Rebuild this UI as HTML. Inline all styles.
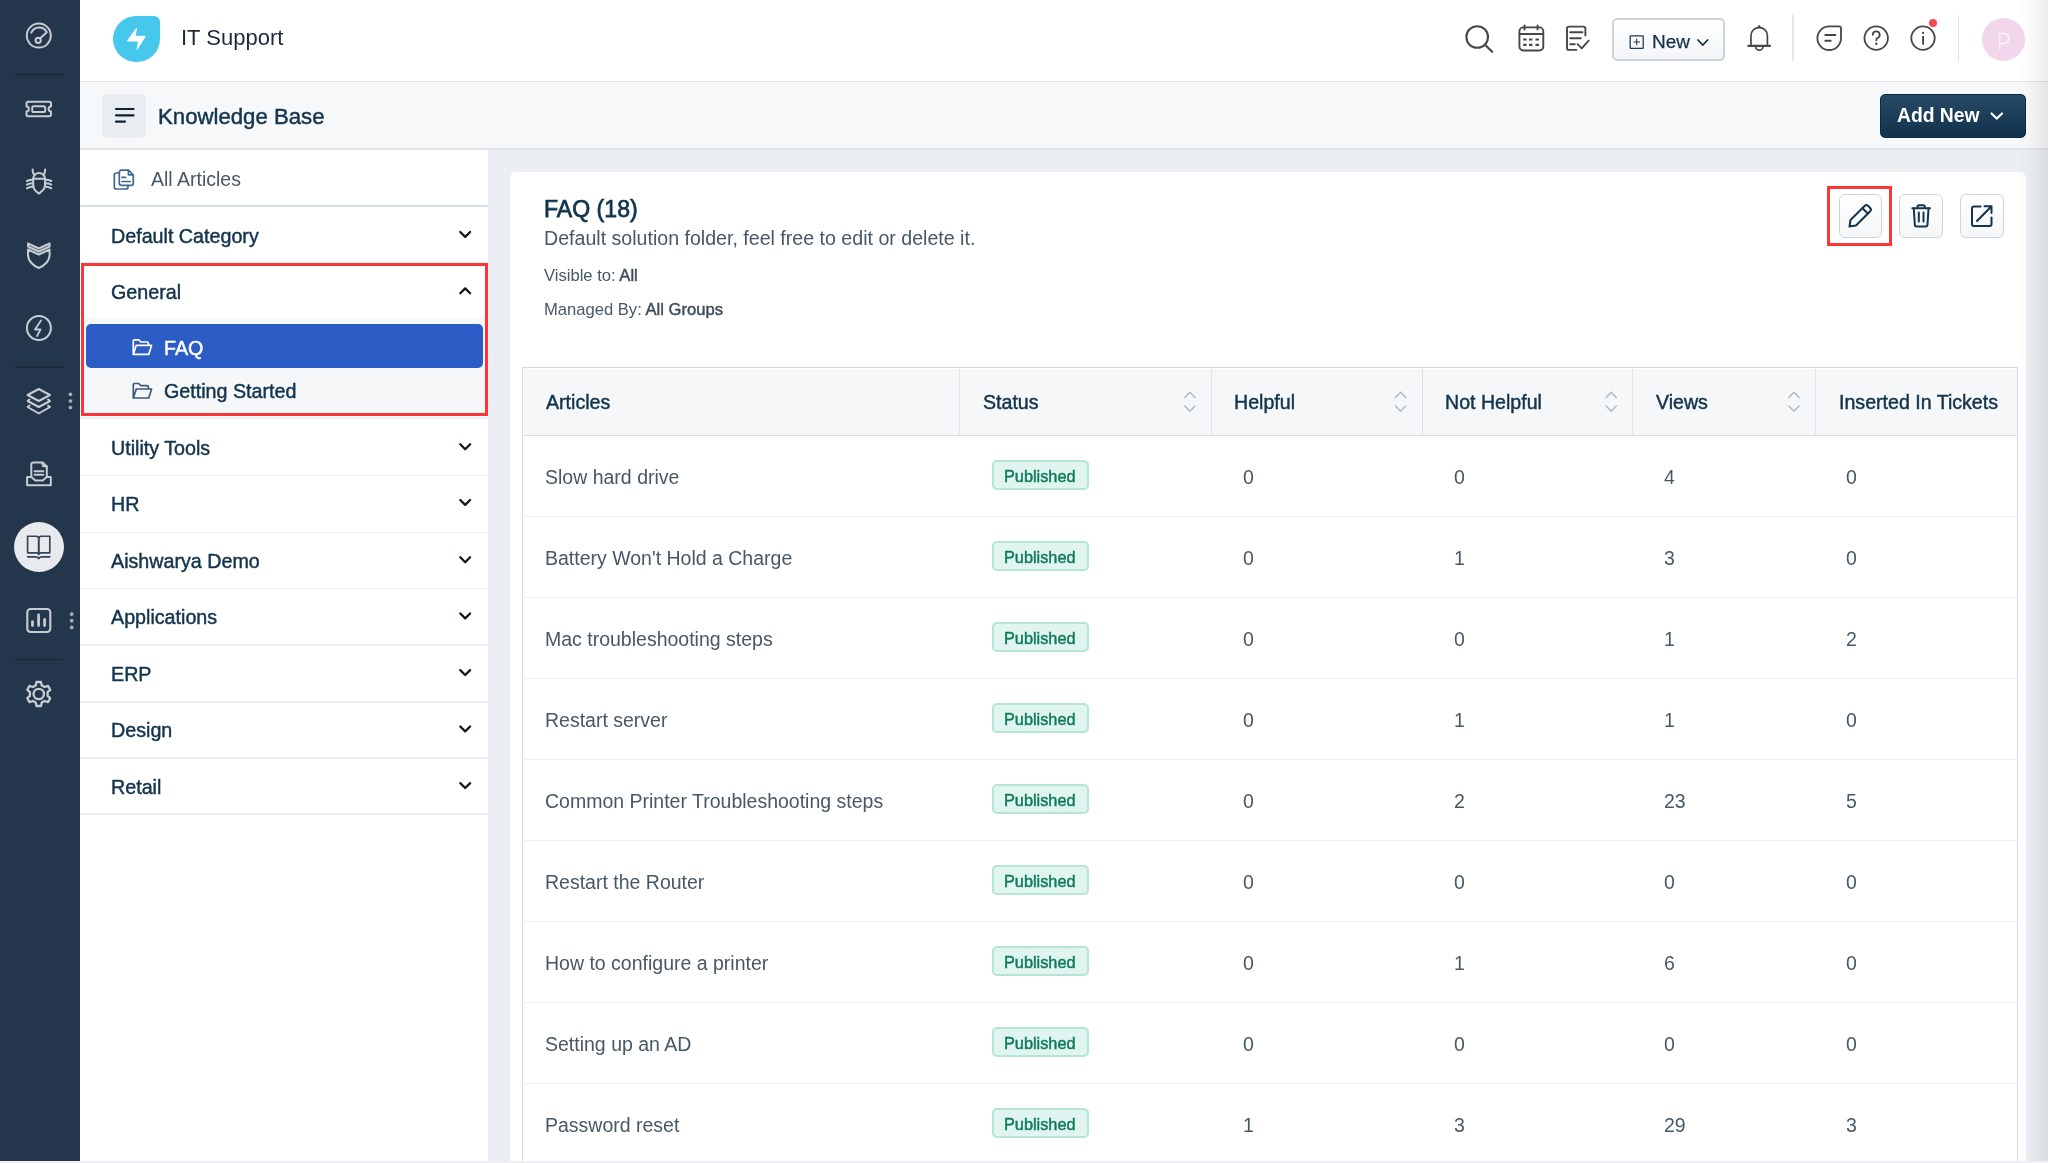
<!DOCTYPE html><html><head><meta charset="utf-8"><style>
*{margin:0;padding:0;box-sizing:border-box}
html,body{width:2048px;height:1163px;overflow:hidden;background:#fff;font-family:"Liberation Sans",sans-serif}
.a{position:absolute}
.t{position:absolute;line-height:1;white-space:nowrap;will-change:transform}
.sb{-webkit-text-stroke:0.45px currentColor}
.b{font-weight:bold}
svg{position:absolute;overflow:visible}
</style></head><body>
<div class="a" style="left:0;top:0;width:80px;height:1163px;background:#24364b"></div>
<svg style="left:0;top:0" width="80" height="1163" fill="none" stroke="#c6ccd3" stroke-width="2" stroke-linecap="round" stroke-linejoin="round">
<!-- gauge -->
<circle cx="38.8" cy="35.6" r="12"/>
<path d="M31.3 32.6 A8.5 8.5 0 0 1 46.8 32.2"/>
<circle cx="38.2" cy="40.3" r="2.6"/>
<path d="M40.2 38.3 L46 33"/>
<!-- divider -->
<path d="M15 74.5 H62.5" stroke="#1a2838" stroke-width="1.5"/>
<!-- ticket -->
<path d="M28.2 101.7 H49.3 A1.8 1.8 0 0 1 51 103.5 V106.6 A2.4 2.4 0 0 0 51 111.4 V114.4 A1.8 1.8 0 0 1 49.3 116.2 H28.2 A1.8 1.8 0 0 1 26.5 114.4 V111.4 A2.4 2.4 0 0 0 26.5 106.6 V103.5 A1.8 1.8 0 0 1 28.2 101.7Z"/>
<rect x="32.2" y="106.3" width="13" height="5.8" rx="1.6"/>
<!-- bug -->
<path d="M33.2 178.7 A5.9 5.6 0 0 1 45 178.7 Z"/>
<path d="M33.2 178.7 V186 C33.2 188.3 36 191.5 38.9 193.6 C41.8 191.5 45 188.3 45 186 V178.7"/>
<path d="M34 174.5 C33 173.3 32.6 171.6 32.6 169.6 M43.8 174.5 C44.8 173.3 45.2 171.6 45.2 169.6"/>
<path d="M33.2 179.8 C30.6 179.8 28.4 180.3 26.9 181 M33.2 183.3 C30.6 183.3 28.4 183.8 26.9 184.6 M33.6 186.6 C30.8 186.8 28.5 187.5 26.9 188.3"/>
<path d="M45 179.8 C47.6 179.8 49.8 180.3 51.3 181 M45 183.3 C47.6 183.3 49.8 183.8 51.3 184.6 M44.6 186.6 C47.4 186.8 49.7 187.5 51.3 188.3"/>
<!-- shield -->
<path d="M28 243.5 L38.8 248.5 L49.6 243.5 V246.5 L38.8 251.5 L28 246.5Z"/>
<path d="M28 249.5 L38.8 254.5 L49.6 249.5 V255 C49.6 261 44 266 38.8 268 C33.6 266 28 261 28 255Z"/>
<!-- lightning circle -->
<circle cx="38.9" cy="328" r="12"/>
<path d="M41 320.5 L35 329.5 H40.5 L37 336" stroke-width="1.8"/>
<!-- divider -->
<path d="M15 367 H62.5" stroke="#1a2838" stroke-width="1.5"/>
<!-- layers -->
<path d="M38.8 389 L50 395 L38.8 401 L27.6 395Z"/>
<path d="M29.5 399.5 L27.6 401 L38.8 407 L50 401 L48.1 399.5"/>
<path d="M29.5 405.5 L27.6 407 L38.8 413.5 L50 407 L48.1 405.5"/>
<!-- inbox -->
<path d="M31.3 476.6 V464.5 A2 2 0 0 1 33.3 462.5 H42.7 L46.8 466.5 V476.6"/>
<path d="M42.7 462.7 V465.3 A1 1 0 0 0 43.7 466.3 H46.6"/>
<path d="M34.6 471.2 H43.3 M34.6 474.7 H43.3"/>
<path d="M27.1 476.9 H31.3 L35.3 480.4 H42.7 L46.8 476.9 H50.8 V485.3 H27.1 Z"/>
<!-- chart -->
<rect x="27.3" y="609" width="23" height="23" rx="3.2" stroke-width="2.1"/>
<path d="M32.5 621.5 V625.6 M38.6 614.8 V625.6 M44.6 619.4 V625.6" stroke-width="2.7"/>
<!-- divider -->
<path d="M15 659.5 H62.5" stroke="#1a2838" stroke-width="1.5"/>
<!-- gear -->
<path stroke-width="2.3" d="M36.5 682 H41 L41.8 685.4 L44.6 687 L48 685.9 L50.2 689.8 L47.6 692.2 V695.8 L50.2 698.2 L48 702.1 L44.6 701 L41.8 702.6 L41 706 H36.5 L35.7 702.6 L32.9 701 L29.5 702.1 L27.3 698.2 L29.9 695.8 V692.2 L27.3 689.8 L29.5 685.9 L32.9 687 L35.7 685.4Z"/>
<circle cx="38.75" cy="694" r="5.2" stroke-width="2.3"/>
</svg>
<svg style="left:0;top:0" width="80" height="700" fill="#a6afb8"><circle cx="70.45" cy="394.3" r="1.85"/><circle cx="70.45" cy="401" r="1.85"/><circle cx="70.45" cy="407.5" r="1.85"/><circle cx="71.7" cy="614.1" r="1.85"/><circle cx="71.7" cy="620.7" r="1.85"/><circle cx="71.7" cy="627.4" r="1.85"/></svg>
<div class="a" style="left:13.6px;top:522px;width:50px;height:50px;border-radius:50%;background:#e8eaed"></div>
<svg style="left:0;top:0" width="80" height="600" fill="none" stroke="#364556" stroke-width="1.65" stroke-linejoin="round" stroke-linecap="round">
<path d="M27.6 536.2 H36 C37.5 536.2 38.7 537.2 38.7 538.8 V554.5 C38.7 553.5 37.8 552.8 36.5 552.8 H27.6Z"/>
<path d="M49.8 536.2 H41.4 C39.9 536.2 38.7 537.2 38.7 538.8 V554.5 C38.7 553.5 39.6 552.8 40.9 552.8 H49.8Z"/>
<path d="M27.6 556.8 H35.5 C37 556.8 38.2 557.6 38.7 558.6 C39.2 557.6 40.4 556.8 41.9 556.8 H49.8"/>
</svg>
<div class="a" style="left:80px;top:0;width:1968px;height:82px;background:#fff;border-bottom:1px solid #dfe3e8"></div>
<div class="a" style="left:113.3px;top:16.4px;width:46.4px;height:46px;background:#45c8ec;border-radius:23px 6px 23px 23px"></div>
<svg style="left:0;top:0" width="200" height="80"><path d="M136.6 28.3 L134.9 36.3 H145.3 L137 49.5 L138.6 41 H127.2 Z" fill="#fff" stroke="#fff" stroke-width="1" stroke-linejoin="round"/></svg>
<div class="t" style="left:180.6px;top:26.97px;font-size:22px;color:#1b2b3a;">IT Support</div>
<svg style="left:0;top:0" width="2048" height="80" fill="none" stroke="#474747" stroke-width="1.9" stroke-linecap="round" stroke-linejoin="round">
<circle cx="1477.2" cy="37" r="10.8" stroke-width="2.1"/>
<path d="M1485.5 45.3 L1492.2 51.8" stroke-width="2.2"/>
<rect x="1519.4" y="27.4" width="23.9" height="23.1" rx="4"/>
<path d="M1519.4 34 H1543.3"/>
<path d="M1524.5 25.4 V29.6 M1537.6 25.4 V29.6" stroke-width="2"/>
<path d="M1524.3 39.5 h1.2 M1530.1 39.5 h1.2 M1536.6 39.5 h1.2 M1524.3 44.8 h1.2 M1530.1 44.8 h1.2 M1536.6 44.8 h1.2" stroke-width="2.2" stroke-linecap="square"/>
<path d="M1576.4 49.9 H1569 A2 2 0 0 1 1567 47.9 V28.6 A2 2 0 0 1 1569 26.6 H1583.4 A2 2 0 0 1 1585.4 28.6 V35.6"/>
<path d="M1570.2 32.3 H1582.5 M1570.2 38.3 H1580.8 M1570.2 44.2 H1574.8"/>
<path d="M1577.6 44.2 L1581.7 48.3 L1588.7 40.7"/>
<path d="M1751 45.5 V35.5 C1751 30.8 1754.6 27.6 1759.2 27.6 C1763.8 27.6 1767.4 30.8 1767.4 35.5 V45.5" stroke-width="1.7"/>
<path d="M1748.3 45.9 H1770" stroke-width="2.1"/>
<path d="M1755.6 46.5 A3.7 3.7 0 0 0 1763 46.5" stroke-width="1.7"/>
<circle cx="1759.2" cy="26.6" r="0.8" fill="#474747" stroke-width="1.2"/>
<path d="M1841 38.2 A11.8 11.8 0 1 1 1829.2 26.4 H1838.8 A2.2 2.2 0 0 1 1841 28.6 Z" stroke-width="1.8"/>
<path d="M1825.3 35 H1835.4 M1825.3 40.7 H1830.7" stroke-width="1.9"/>
<circle cx="1876.2" cy="38.1" r="11.7" stroke-width="1.8"/>
<path d="M1872.7 34.8 A3.5 3.5 0 1 1 1877.4 38.1 C1876.6 38.6 1876.3 39.3 1876.3 40.3" stroke-width="1.8"/>
<path d="M1876.3 43.6 V43.9" stroke-width="2.3"/>
<circle cx="1923" cy="38.1" r="11.7" stroke-width="1.8"/>
<path d="M1923.1 36.6 V43.9" stroke-width="1.9"/>
<path d="M1923.1 32.8 V33" stroke-width="2.2"/>
</svg>
<div class="a" style="left:1928.95px;top:18.95px;width:7.9px;height:7.9px;border-radius:50%;background:#f04b4e"></div>
<div class="a" style="left:1792.3px;top:14.7px;width:1.4px;height:46.5px;background:#e3e6e9"></div>
<div class="a" style="left:1958px;top:14.7px;width:1.4px;height:46.5px;background:#e3e6e9"></div>
<div class="a" style="left:1612px;top:18px;width:113px;height:43px;border:2px solid #cbd3db;border-radius:5px;background:linear-gradient(#fff,#f3f5f7)"></div>
<svg style="left:0;top:0" width="2048" height="80" fill="none" stroke="#1f3b52" stroke-width="1.3"><rect x="1630.2" y="35.8" width="13" height="12.6" rx="0.5"/><path d="M1636.7 38.8 V45.2 M1633.4 42 H1640" stroke-width="1.1"/></svg>
<div class="t sb" style="left:1651.8px;top:31.71px;font-size:19px;color:#12344d;-webkit-text-stroke:0.25px currentColor;">New</div>
<svg style="left:0;top:0" width="2048" height="80" fill="none" stroke="#12344d" stroke-width="1.8" stroke-linecap="round"><path d="M1698 40 L1702.8 45 L1707.6 40"/></svg>
<div class="a" style="left:1982px;top:18px;width:43px;height:43px;border-radius:50%;background:#f2d6ec"></div>
<svg style="left:0;top:0" width="2048" height="80" fill="none" stroke="#fdf5fb" stroke-width="1.5"><path d="M1999.6 49.6 V33.4 H2004 C2007 33.4 2008.6 35.4 2008.6 38.4 C2008.6 41.4 2007 43.4 2004 43.4 H1999.6"/></svg>
<div class="a" style="left:80px;top:82px;width:1968px;height:68px;background:#f7f8fa;border-bottom:2px solid #dfe3e8"></div>
<div class="a" style="left:102px;top:94px;width:44px;height:44px;border-radius:5px;background:#e9edf1"></div>
<svg style="left:0;top:0" width="200" height="150" stroke="#0e2233" stroke-width="2.2" stroke-linecap="round"><path d="M116 109 H133.5 M116 115.3 H133.5 M116 121.6 H125"/></svg>
<div class="t sb" style="left:158px;top:105.90px;font-size:22.2px;color:#12344d;">Knowledge Base</div>
<div class="a" style="left:1880px;top:94px;width:146px;height:44px;border-radius:5px;background:linear-gradient(#274a67,#12324b);border:1px solid #0e2a40"></div>
<div class="t b" style="left:1897.4px;top:105.96px;font-size:19.3px;color:#fff;">Add New</div>
<svg style="left:0;top:0" width="2048" height="150" fill="none" stroke="#fff" stroke-width="2.2" stroke-linecap="round"><path d="M1991.5 113.5 L1996.8 118.5 L2002 113.5"/></svg>
<div class="a" style="left:80px;top:150px;width:408px;height:1013px;background:#fff"></div>
<div class="a" style="left:488px;top:150px;width:1560px;height:1013px;background:#ebeef2"></div>
<svg style="left:0;top:0" width="500" height="200" fill="none" stroke="#3e6a91" stroke-width="1.7" stroke-linejoin="round" stroke-linecap="round"><path d="M118.8 173 H116.3 A2 2 0 0 0 114.3 175 V187 A2 2 0 0 0 116.3 189 H126 A2 2 0 0 0 128 187 V185.6"/><path d="M119.3 172.3 A2 2 0 0 1 121.3 170.2 H128.5 L133.3 175 V183.3 A2 2 0 0 1 131.3 185.3 H121.3 A2 2 0 0 1 119.3 183.3 Z"/><path d="M128.4 170.6 V174.2 A0.7 0.7 0 0 0 129.1 174.9 H133"/><path d="M122 177.4 H125.6 M122 181.5 H130.3"/></svg>
<div class="t" style="left:150.8px;top:169.89px;font-size:19.5px;color:#475867;">All Articles</div>
<div class="a" style="left:80px;top:205px;width:408px;height:2px;background:#d5dde4"></div>
<div class="a" style="left:83px;top:318px;width:402px;height:96px;background:#f5f7f9"></div>
<div class="t sb" style="left:111.2px;top:226.82px;font-size:19.7px;color:#12344d;">Default Category</div>
<svg style="left:0;top:0" width="500" height="900" fill="none" stroke="#101820" stroke-width="2.3" stroke-linecap="round" stroke-linejoin="round"><path d="M460.3 232.0 L465.2 236.9 L470.1 232.0"/></svg>
<div class="t sb" style="left:111.2px;top:283.32px;font-size:19.7px;color:#12344d;">General</div>
<svg style="left:0;top:0" width="500" height="900" fill="none" stroke="#101820" stroke-width="2.3" stroke-linecap="round" stroke-linejoin="round"><path d="M460.3 293.3 L465.2 288.4 L470.1 293.3"/></svg>
<div class="t sb" style="left:111.2px;top:439.12px;font-size:19.7px;color:#12344d;">Utility Tools</div>
<svg style="left:0;top:0" width="500" height="900" fill="none" stroke="#101820" stroke-width="2.3" stroke-linecap="round" stroke-linejoin="round"><path d="M460.3 444.3 L465.2 449.2 L470.1 444.3"/></svg>
<div class="t sb" style="left:111.2px;top:494.82px;font-size:19.7px;color:#12344d;">HR</div>
<svg style="left:0;top:0" width="500" height="900" fill="none" stroke="#101820" stroke-width="2.3" stroke-linecap="round" stroke-linejoin="round"><path d="M460.3 500.0 L465.2 504.9 L470.1 500.0"/></svg>
<div class="t sb" style="left:111.2px;top:552.12px;font-size:19.7px;color:#12344d;">Aishwarya Demo</div>
<svg style="left:0;top:0" width="500" height="900" fill="none" stroke="#101820" stroke-width="2.3" stroke-linecap="round" stroke-linejoin="round"><path d="M460.3 557.3 L465.2 562.1999999999999 L470.1 557.3"/></svg>
<div class="t sb" style="left:111.2px;top:608.32px;font-size:19.7px;color:#12344d;">Applications</div>
<svg style="left:0;top:0" width="500" height="900" fill="none" stroke="#101820" stroke-width="2.3" stroke-linecap="round" stroke-linejoin="round"><path d="M460.3 613.5 L465.2 618.4 L470.1 613.5"/></svg>
<div class="t sb" style="left:111.2px;top:664.92px;font-size:19.7px;color:#12344d;">ERP</div>
<svg style="left:0;top:0" width="500" height="900" fill="none" stroke="#101820" stroke-width="2.3" stroke-linecap="round" stroke-linejoin="round"><path d="M460.3 670.1 L465.2 675.0 L470.1 670.1"/></svg>
<div class="t sb" style="left:111.2px;top:721.32px;font-size:19.7px;color:#12344d;">Design</div>
<svg style="left:0;top:0" width="500" height="900" fill="none" stroke="#101820" stroke-width="2.3" stroke-linecap="round" stroke-linejoin="round"><path d="M460.3 726.5 L465.2 731.4 L470.1 726.5"/></svg>
<div class="t sb" style="left:111.2px;top:777.92px;font-size:19.7px;color:#12344d;">Retail</div>
<svg style="left:0;top:0" width="500" height="900" fill="none" stroke="#101820" stroke-width="2.3" stroke-linecap="round" stroke-linejoin="round"><path d="M460.3 783.1 L465.2 788.0 L470.1 783.1"/></svg>
<div class="a" style="left:80px;top:261.5px;width:408px;height:1.5px;background:#ebeff3"></div>
<div class="a" style="left:80px;top:417.3px;width:408px;height:1.5px;background:#ebeff3"></div>
<div class="a" style="left:80px;top:474.5px;width:408px;height:1.5px;background:#ebeff3"></div>
<div class="a" style="left:80px;top:531.5px;width:408px;height:1.5px;background:#ebeff3"></div>
<div class="a" style="left:80px;top:587.5px;width:408px;height:1.5px;background:#ebeff3"></div>
<div class="a" style="left:80px;top:644.3px;width:408px;height:1.5px;background:#ebeff3"></div>
<div class="a" style="left:80px;top:701px;width:408px;height:1.5px;background:#ebeff3"></div>
<div class="a" style="left:80px;top:757.3px;width:408px;height:1.5px;background:#ebeff3"></div>
<div class="a" style="left:80px;top:813.3px;width:408px;height:1.5px;background:#ebeff3"></div>
<div class="a" style="left:85.7px;top:323.8px;width:397.3px;height:44px;border-radius:5px;background:#2c5cc5"></div>
<svg style="left:0;top:0" width="500" height="500" fill="none" stroke="#ffffff" stroke-width="1.7" stroke-linejoin="round"><path d="M133.3 354.3 V340.8 A1 1 0 0 1 134.3 339.8 H138.8 L140.8 342.0 H147.3 A1 1 0 0 1 148.3 343.0 V345.3"/><path d="M133.3 354.3 L136.3 345.3 H151.60000000000002 L148.8 354.3 Z"/></svg>
<div class="t sb" style="left:164px;top:338.52px;font-size:19.7px;color:#fff;">FAQ</div>
<svg style="left:0;top:0" width="500" height="500" fill="none" stroke="#3b5a78" stroke-width="1.7" stroke-linejoin="round"><path d="M133.3 398.0 V384.5 A1 1 0 0 1 134.3 383.5 H138.8 L140.8 385.7 H147.3 A1 1 0 0 1 148.3 386.7 V389.0"/><path d="M133.3 398.0 L136.3 389.0 H151.60000000000002 L148.8 398.0 Z"/></svg>
<div class="t sb" style="left:164px;top:382.12px;font-size:19.7px;color:#12344d;">Getting Started</div>
<div class="a" style="left:81px;top:263px;width:407px;height:153px;border:3px solid #fc3538"></div>
<div class="a" style="left:510px;top:172px;width:1516px;height:1000px;border-radius:6px;background:#fff"></div>
<div class="t sb" style="left:544.2px;top:198.44px;font-size:23.1px;color:#12344d;-webkit-text-stroke:0.75px currentColor;">FAQ (18)</div>
<div class="t" style="left:544px;top:229.40px;font-size:19.6px;color:#475867;">Default solution folder, feel free to edit or delete it.</div>
<div class="t" style="left:544px;top:268.44px;font-size:16.6px;color:#475867;">Visible to: <span class="sb" style="color:#3c4d5c">All</span></div>
<div class="t" style="left:544px;top:301.54px;font-size:16.6px;color:#475867;">Managed By: <span class="sb" style="color:#3c4d5c">All Groups</span></div>
<div class="a" style="left:1838.6px;top:194px;width:43.5px;height:43.5px;border:1.7px solid #ccd5dd;border-radius:6px;background:linear-gradient(#fff,#f4f6f8)"></div>
<div class="a" style="left:1899.3px;top:194px;width:43.5px;height:43.5px;border:1.7px solid #ccd5dd;border-radius:6px;background:linear-gradient(#fff,#f4f6f8)"></div>
<div class="a" style="left:1960px;top:194px;width:43.5px;height:43.5px;border:1.7px solid #ccd5dd;border-radius:6px;background:linear-gradient(#fff,#f4f6f8)"></div>
<svg style="left:0;top:0" width="2048" height="300" fill="none" stroke="#12344d" stroke-width="2" stroke-linejoin="round" stroke-linecap="round">
<path d="M1849.5 226.5 L1850.5 220 L1864.8 205.8 A2.3 2.3 0 0 1 1868 205.8 L1870.2 208 A2.3 2.3 0 0 1 1870.2 211.2 L1856 225.5 Z"/>
<path d="M1862.5 208.2 L1867.8 213.5"/>
<path d="M1912.3 208.3 H1930"/>
<path d="M1917.5 208 V206.8 A1.5 1.5 0 0 1 1919 205.3 H1923.3 A1.5 1.5 0 0 1 1924.8 206.8 V208"/>
<path d="M1913.8 208.5 L1914.8 224.5 A2 2 0 0 0 1916.8 226.5 H1925.5 A2 2 0 0 0 1927.5 224.5 L1928.5 208.5"/>
<path d="M1918.8 212.5 V221.5 M1923.5 212.5 V221.5"/>
<path d="M1980.5 206.5 H1974 A2 2 0 0 0 1972 208.5 V224 A2 2 0 0 0 1974 226 H1989.5 A2 2 0 0 0 1991.5 224 V217.5"/>
<path d="M1977 221 L1991.5 206.2 M1984.5 206.2 H1991.5 V213"/>
</svg>
<div class="a" style="left:1827px;top:185.8px;width:64.5px;height:59.8px;border:3px solid #fc3538"></div>
<div class="a" style="left:522px;top:367px;width:1496px;height:800px;border:1.5px solid #d3dce3;border-bottom:none"></div>
<div class="a" style="left:523.5px;top:368.5px;width:1493px;height:67px;background:#f5f7f9;border-bottom:1.5px solid #d3dce3"></div>
<div class="a" style="left:958.9px;top:368.5px;width:1.3px;height:67px;background:#dde3e8"></div>
<div class="a" style="left:1210.8000000000002px;top:368.5px;width:1.3px;height:67px;background:#dde3e8"></div>
<div class="a" style="left:1421.9px;top:368.5px;width:1.3px;height:67px;background:#dde3e8"></div>
<div class="a" style="left:1631.6000000000001px;top:368.5px;width:1.3px;height:67px;background:#dde3e8"></div>
<div class="a" style="left:1814.7px;top:368.5px;width:1.3px;height:67px;background:#dde3e8"></div>
<div class="t sb" style="left:545.6px;top:393.20px;font-size:19.6px;color:#12344d;">Articles</div>
<div class="t sb" style="left:982.5px;top:393.20px;font-size:19.6px;color:#12344d;">Status</div>
<div class="t sb" style="left:1234px;top:393.20px;font-size:19.6px;color:#12344d;">Helpful</div>
<div class="t sb" style="left:1445.2px;top:393.20px;font-size:19.6px;color:#12344d;">Not Helpful</div>
<div class="t sb" style="left:1655.5px;top:393.20px;font-size:19.6px;color:#12344d;">Views</div>
<div class="t sb" style="left:1838.6px;top:393.20px;font-size:19.6px;color:#12344d;">Inserted In Tickets</div>
<svg style="left:0;top:0" width="2048" height="500" fill="none" stroke="#aebbc6" stroke-width="1.6" stroke-linecap="round"><path d="M1184.8 397.5 L1189.8999999999999 392.3 L1195.0 397.5 M1184.8 406 L1189.8999999999999 411.2 L1195.0 406"/></svg>
<svg style="left:0;top:0" width="2048" height="500" fill="none" stroke="#aebbc6" stroke-width="1.6" stroke-linecap="round"><path d="M1395.5 397.5 L1400.6 392.3 L1405.7 397.5 M1395.5 406 L1400.6 411.2 L1405.7 406"/></svg>
<svg style="left:0;top:0" width="2048" height="500" fill="none" stroke="#aebbc6" stroke-width="1.6" stroke-linecap="round"><path d="M1606.1 397.5 L1611.1999999999998 392.3 L1616.3 397.5 M1606.1 406 L1611.1999999999998 411.2 L1616.3 406"/></svg>
<svg style="left:0;top:0" width="2048" height="500" fill="none" stroke="#aebbc6" stroke-width="1.6" stroke-linecap="round"><path d="M1788.9 397.5 L1794.0 392.3 L1799.1000000000001 397.5 M1788.9 406 L1794.0 411.2 L1799.1000000000001 406"/></svg>
<div class="t" style="left:545px;top:467.99px;font-size:19.5px;color:#475867;">Slow hard drive</div>
<div class="a" style="left:991.5px;top:459.6px;width:97px;height:30px;border:2px solid #b6e5d8;border-radius:5px;background:#e0f5f0"></div>
<div class="t sb" style="left:1003.6px;top:468.40px;font-size:16.3px;color:#0e7a5a;">Published</div>
<div class="t" style="left:1243px;top:468.29px;font-size:19.5px;color:#475867;">0</div>
<div class="t" style="left:1453.7px;top:468.29px;font-size:19.5px;color:#475867;">0</div>
<div class="t" style="left:1663.8px;top:468.29px;font-size:19.5px;color:#475867;">4</div>
<div class="t" style="left:1846.3px;top:468.29px;font-size:19.5px;color:#475867;">0</div>
<div class="a" style="left:523.5px;top:515.5px;width:1493px;height:1.5px;background:#ebeff3"></div>
<div class="t" style="left:545px;top:548.99px;font-size:19.5px;color:#475867;">Battery Won't Hold a Charge</div>
<div class="a" style="left:991.5px;top:540.6px;width:97px;height:30px;border:2px solid #b6e5d8;border-radius:5px;background:#e0f5f0"></div>
<div class="t sb" style="left:1003.6px;top:549.40px;font-size:16.3px;color:#0e7a5a;">Published</div>
<div class="t" style="left:1243px;top:549.29px;font-size:19.5px;color:#475867;">0</div>
<div class="t" style="left:1453.7px;top:549.29px;font-size:19.5px;color:#475867;">1</div>
<div class="t" style="left:1663.8px;top:549.29px;font-size:19.5px;color:#475867;">3</div>
<div class="t" style="left:1846.3px;top:549.29px;font-size:19.5px;color:#475867;">0</div>
<div class="a" style="left:523.5px;top:596.5px;width:1493px;height:1.5px;background:#ebeff3"></div>
<div class="t" style="left:545px;top:629.99px;font-size:19.5px;color:#475867;">Mac troubleshooting steps</div>
<div class="a" style="left:991.5px;top:621.6px;width:97px;height:30px;border:2px solid #b6e5d8;border-radius:5px;background:#e0f5f0"></div>
<div class="t sb" style="left:1003.6px;top:630.40px;font-size:16.3px;color:#0e7a5a;">Published</div>
<div class="t" style="left:1243px;top:630.29px;font-size:19.5px;color:#475867;">0</div>
<div class="t" style="left:1453.7px;top:630.29px;font-size:19.5px;color:#475867;">0</div>
<div class="t" style="left:1663.8px;top:630.29px;font-size:19.5px;color:#475867;">1</div>
<div class="t" style="left:1846.3px;top:630.29px;font-size:19.5px;color:#475867;">2</div>
<div class="a" style="left:523.5px;top:677.5px;width:1493px;height:1.5px;background:#ebeff3"></div>
<div class="t" style="left:545px;top:710.99px;font-size:19.5px;color:#475867;">Restart server</div>
<div class="a" style="left:991.5px;top:702.6px;width:97px;height:30px;border:2px solid #b6e5d8;border-radius:5px;background:#e0f5f0"></div>
<div class="t sb" style="left:1003.6px;top:711.40px;font-size:16.3px;color:#0e7a5a;">Published</div>
<div class="t" style="left:1243px;top:711.29px;font-size:19.5px;color:#475867;">0</div>
<div class="t" style="left:1453.7px;top:711.29px;font-size:19.5px;color:#475867;">1</div>
<div class="t" style="left:1663.8px;top:711.29px;font-size:19.5px;color:#475867;">1</div>
<div class="t" style="left:1846.3px;top:711.29px;font-size:19.5px;color:#475867;">0</div>
<div class="a" style="left:523.5px;top:758.5px;width:1493px;height:1.5px;background:#ebeff3"></div>
<div class="t" style="left:545px;top:791.99px;font-size:19.5px;color:#475867;">Common Printer Troubleshooting steps</div>
<div class="a" style="left:991.5px;top:783.6px;width:97px;height:30px;border:2px solid #b6e5d8;border-radius:5px;background:#e0f5f0"></div>
<div class="t sb" style="left:1003.6px;top:792.40px;font-size:16.3px;color:#0e7a5a;">Published</div>
<div class="t" style="left:1243px;top:792.29px;font-size:19.5px;color:#475867;">0</div>
<div class="t" style="left:1453.7px;top:792.29px;font-size:19.5px;color:#475867;">2</div>
<div class="t" style="left:1663.8px;top:792.29px;font-size:19.5px;color:#475867;">23</div>
<div class="t" style="left:1846.3px;top:792.29px;font-size:19.5px;color:#475867;">5</div>
<div class="a" style="left:523.5px;top:839.5px;width:1493px;height:1.5px;background:#ebeff3"></div>
<div class="t" style="left:545px;top:872.99px;font-size:19.5px;color:#475867;">Restart the Router</div>
<div class="a" style="left:991.5px;top:864.6px;width:97px;height:30px;border:2px solid #b6e5d8;border-radius:5px;background:#e0f5f0"></div>
<div class="t sb" style="left:1003.6px;top:873.40px;font-size:16.3px;color:#0e7a5a;">Published</div>
<div class="t" style="left:1243px;top:873.29px;font-size:19.5px;color:#475867;">0</div>
<div class="t" style="left:1453.7px;top:873.29px;font-size:19.5px;color:#475867;">0</div>
<div class="t" style="left:1663.8px;top:873.29px;font-size:19.5px;color:#475867;">0</div>
<div class="t" style="left:1846.3px;top:873.29px;font-size:19.5px;color:#475867;">0</div>
<div class="a" style="left:523.5px;top:920.5px;width:1493px;height:1.5px;background:#ebeff3"></div>
<div class="t" style="left:545px;top:953.99px;font-size:19.5px;color:#475867;">How to configure a printer</div>
<div class="a" style="left:991.5px;top:945.6px;width:97px;height:30px;border:2px solid #b6e5d8;border-radius:5px;background:#e0f5f0"></div>
<div class="t sb" style="left:1003.6px;top:954.40px;font-size:16.3px;color:#0e7a5a;">Published</div>
<div class="t" style="left:1243px;top:954.29px;font-size:19.5px;color:#475867;">0</div>
<div class="t" style="left:1453.7px;top:954.29px;font-size:19.5px;color:#475867;">1</div>
<div class="t" style="left:1663.8px;top:954.29px;font-size:19.5px;color:#475867;">6</div>
<div class="t" style="left:1846.3px;top:954.29px;font-size:19.5px;color:#475867;">0</div>
<div class="a" style="left:523.5px;top:1001.5px;width:1493px;height:1.5px;background:#ebeff3"></div>
<div class="t" style="left:545px;top:1034.99px;font-size:19.5px;color:#475867;">Setting up an AD</div>
<div class="a" style="left:991.5px;top:1026.6px;width:97px;height:30px;border:2px solid #b6e5d8;border-radius:5px;background:#e0f5f0"></div>
<div class="t sb" style="left:1003.6px;top:1035.40px;font-size:16.3px;color:#0e7a5a;">Published</div>
<div class="t" style="left:1243px;top:1035.29px;font-size:19.5px;color:#475867;">0</div>
<div class="t" style="left:1453.7px;top:1035.29px;font-size:19.5px;color:#475867;">0</div>
<div class="t" style="left:1663.8px;top:1035.29px;font-size:19.5px;color:#475867;">0</div>
<div class="t" style="left:1846.3px;top:1035.29px;font-size:19.5px;color:#475867;">0</div>
<div class="a" style="left:523.5px;top:1082.5px;width:1493px;height:1.5px;background:#ebeff3"></div>
<div class="t" style="left:545px;top:1115.99px;font-size:19.5px;color:#475867;">Password reset</div>
<div class="a" style="left:991.5px;top:1107.6px;width:97px;height:30px;border:2px solid #b6e5d8;border-radius:5px;background:#e0f5f0"></div>
<div class="t sb" style="left:1003.6px;top:1116.40px;font-size:16.3px;color:#0e7a5a;">Published</div>
<div class="t" style="left:1243px;top:1116.29px;font-size:19.5px;color:#475867;">1</div>
<div class="t" style="left:1453.7px;top:1116.29px;font-size:19.5px;color:#475867;">3</div>
<div class="t" style="left:1663.8px;top:1116.29px;font-size:19.5px;color:#475867;">29</div>
<div class="t" style="left:1846.3px;top:1116.29px;font-size:19.5px;color:#475867;">3</div>
<div class="a" style="left:2018px;top:0;width:30px;height:1163px;background:linear-gradient(90deg,rgba(0,0,0,0) 0%,rgba(0,0,0,0.012) 30%,rgba(0,0,0,0.03) 60%,rgba(0,0,0,0.075) 100%)"></div>
<div class="a" style="left:0;top:1161px;width:2048px;height:2px;background:#eef0f3"></div>
</body></html>
